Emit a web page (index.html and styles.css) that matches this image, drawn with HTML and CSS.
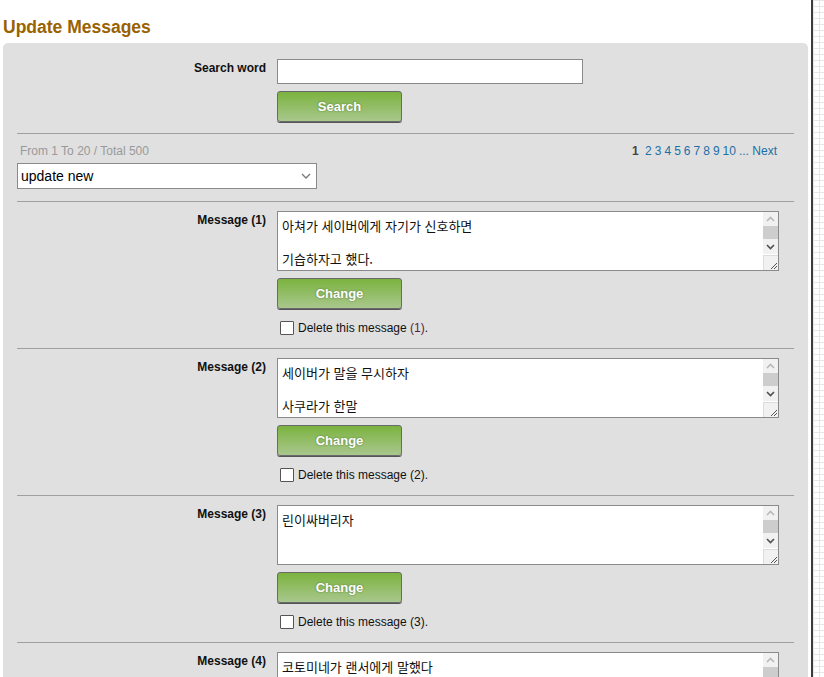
FILE: index.html
```html
<!DOCTYPE html>
<html lang="ko">

<head>
    <meta charset="UTF-8">
    <title>Update Messages</title>
    <link rel="stylesheet" href="styles.css">
</head>

<body>
    <div class="main">
        <h1 class="title">Update Messages</h1>

        <div class="panel">
            <!-- search -->
            <div class="row">
                <label class="label" for="word">Search word</label>
                <div class="field">
                    <input type="text" id="word" class="text-input">
                    <button class="green-btn">Search</button>
                </div>
            </div>

            <div class="rule rule-top"></div>

            <div class="list-head">
                <span class="count">From 1 To 20 / Total 500</span>
                <span class="pages">
                    <b>1</b>
                    <a href="#">2</a><a href="#">3</a><a href="#">4</a><a href="#">5</a><a href="#">6</a><a href="#">7</a><a href="#">8</a><a href="#">9</a><a href="#">10</a><span class="dots">...</span> <a href="#">Next</a>
                </span>
            </div>
            <select class="order">
                <option>update new</option>
                <option>update old</option>
            </select>

            <div class="rule rule-list"></div>

            <div class="row msg">
                <label class="label">Message (1)</label>
                <div class="field">
                    <div class="box">
                        <textarea class="msg-text">아쳐가 세이버에게 자기가 신호하면

기습하자고 했다.</textarea>
                        <div class="sbar">
                            <div class="sb-btn"><svg width="9" height="6"><path d="M1 5l3.5-3.5L8 5" fill="none" stroke="#b8b8b8" stroke-width="1.6"/></svg></div>
                            <div class="sb-thumb"></div>
                            <div class="sb-track"></div>
                            <div class="sb-btn"><svg width="9" height="6"><path d="M1 1l3.5 3.5L8 1" fill="none" stroke="#505050" stroke-width="1.6"/></svg></div>
                        </div>
                    </div>
                    <button class="green-btn">Change</button>
                    <label class="del"><input type="checkbox"><span>Delete this message <span class="num">(1)</span>.</span></label>
                </div>
            </div>
            <div class="rule"></div>

            <div class="row msg">
                <label class="label">Message (2)</label>
                <div class="field">
                    <div class="box">
                        <textarea class="msg-text">세이버가 말을 무시하자

사쿠라가 한말</textarea>
                        <div class="sbar">
                            <div class="sb-btn"><svg width="9" height="6"><path d="M1 5l3.5-3.5L8 5" fill="none" stroke="#b8b8b8" stroke-width="1.6"/></svg></div>
                            <div class="sb-thumb"></div>
                            <div class="sb-track"></div>
                            <div class="sb-btn"><svg width="9" height="6"><path d="M1 1l3.5 3.5L8 1" fill="none" stroke="#505050" stroke-width="1.6"/></svg></div>
                        </div>
                    </div>
                    <button class="green-btn">Change</button>
                    <label class="del"><input type="checkbox"><span>Delete this message (2).</span></label>
                </div>
            </div>
            <div class="rule"></div>

            <div class="row msg">
                <label class="label">Message (3)</label>
                <div class="field">
                    <div class="box">
                        <textarea class="msg-text">린이싸버리자</textarea>
                        <div class="sbar">
                            <div class="sb-btn"><svg width="9" height="6"><path d="M1 5l3.5-3.5L8 5" fill="none" stroke="#b8b8b8" stroke-width="1.6"/></svg></div>
                            <div class="sb-thumb"></div>
                            <div class="sb-track"></div>
                            <div class="sb-btn"><svg width="9" height="6"><path d="M1 1l3.5 3.5L8 1" fill="none" stroke="#505050" stroke-width="1.6"/></svg></div>
                        </div>
                    </div>
                    <button class="green-btn">Change</button>
                    <label class="del"><input type="checkbox"><span>Delete this message (3).</span></label>
                </div>
            </div>
            <div class="rule"></div>

            <div class="row msg">
                <label class="label">Message (4)</label>
                <div class="field">
                    <div class="box">
                        <textarea class="msg-text">코토미네가 랜서에게 말했다</textarea>
                        <div class="sbar">
                            <div class="sb-btn"><svg width="9" height="6"><path d="M1 5l3.5-3.5L8 5" fill="none" stroke="#b8b8b8" stroke-width="1.6"/></svg></div>
                            <div class="sb-thumb"></div>
                            <div class="sb-track"></div>
                            <div class="sb-btn"><svg width="9" height="6"><path d="M1 1l3.5 3.5L8 1" fill="none" stroke="#505050" stroke-width="1.6"/></svg></div>
                        </div>
                    </div>
                    <button class="green-btn">Change</button>
                    <label class="del"><input type="checkbox"><span>Delete this message (4).</span></label>
                </div>
            </div>
        </div>
    </div>
    <div class="side"></div>
</body>

</html>
```

FILE: styles.css
```css
html,
body {
    height: 100%;
    overflow: hidden;
}

body {
    font-family: "Liberation Sans", Arial, sans-serif;
    font-size: 12px;
    color: #222;
    margin: 0;
    padding: 0;
    display: flex;
    background-color: #fff;
}

.main {
    width: 805px;
    padding: 0 3px;
    flex-shrink: 0;
}

.side {
    flex: 1;
    border-left: 2px solid #3c3c3c;
    background-color: #fff;
    background-image:
        linear-gradient(#e6e6e6 1px, transparent 1px),
        linear-gradient(90deg, #e6e6e6 1px, transparent 1px);
    background-size: 6px 6px;
}

.title {
    font-size: 17.5px;
    color: #9a6200;
    margin: 0;
    padding: 17px 0 5px 0;
    line-height: 21px;
}

.panel {
    background-color: #e0e0e0;
    border-radius: 5px;
    padding: 16px 14px 20px 14px;
}

.row {
    display: grid;
    grid-template-columns: 249px 1fr;
    column-gap: 11px;
}

.label {
    font-weight: bold;
    text-align: right;
    padding-top: 2px;
    color: #111;
}

.field {
    display: flex;
    flex-direction: column;
    align-items: flex-start;
}

.text-input {
    width: 306px;
    height: 25px;
    box-sizing: border-box;
    border: 1px solid #8a8a8a;
    margin: 0;
}

.green-btn {
    width: 125px;
    height: 31px;
    margin-top: 7px;
    border: 1px solid #6a6a6a;
    border-radius: 3px;
    background: linear-gradient(#7bb33f, #a9c78d);
    color: white;
    font-family: "Liberation Sans", Arial, sans-serif;
    font-size: 13px;
    font-weight: bold;
    text-shadow: 0 0 2px rgba(40, 70, 30, 0.6);
    box-shadow: 0 1px 0 #555;
    cursor: pointer;
}

.rule {
    border-top: 1px solid #a0a0a0;
    margin: 13px 0 9px 0;
}

.rule-top {
    margin: 11px 0 10px 0;
}

.rule-list {
    margin: 12px 0 9px 0;
}

.list-head {
    display: flex;
    justify-content: space-between;
    padding: 0 14px 0 3px;
    line-height: 14px;
}

.count {
    color: #999;
}

.pages b {
    color: #444;
    margin-right: 3px;
}

.pages a {
    color: #1d6fa5;
    text-decoration: none;
    margin-right: 3px;
}

.pages .dots {
    color: #1d6fa5;
}

.order {
    display: block;
    margin-top: 5px;
    width: 300px;
    height: 26px;
    padding: 0 3px;
    border: 1px solid #8a8a8a;
    border-radius: 0;
    font-family: "Liberation Sans", Arial, sans-serif;
    font-size: 14px;
    background-color: #fff;
    color: #000;
    appearance: none;
    background-image: url("data:image/svg+xml,%3Csvg xmlns='http://www.w3.org/2000/svg' width='10' height='6'%3E%3Cpath d='M1 1l4 4 4-4' fill='none' stroke='%23777' stroke-width='1.3'/%3E%3C/svg%3E");
    background-repeat: no-repeat;
    background-position: right 5px center;
}

.msg .label {
    padding-top: 2px;
}

.box {
    position: relative;
    width: 502px;
    height: 60px;
}

.msg-text {
    display: block;
    width: 502px;
    height: 60px;
    box-sizing: border-box;
    border: 1px solid #8a8a8a;
    margin: 0;
    padding: 6px 20px 4px 4px;
    font-family: "Noto Sans CJK KR", "Liberation Sans", sans-serif;
    font-size: 13px;
    line-height: 16.5px;
    color: #111;
    overflow: hidden;
}

.msg-text::-webkit-resizer {
    background-color: #f1f1f1;
    background-image: url("data:image/svg+xml,%3Csvg xmlns='http://www.w3.org/2000/svg' width='15' height='15'%3E%3Cpath d='M13 7l-6 6M13 10l-3 3' stroke='%23555' stroke-width='1'/%3E%3C/svg%3E");
    border-left: 1px solid #dcdcdc;
    border-top: 1px solid #dcdcdc;
}

/* fake classic scrollbar drawn over the textarea */
.sbar {
    position: absolute;
    top: 1px;
    right: 1px;
    width: 15px;
    height: 42px;
    display: flex;
    flex-direction: column;
    background-color: #f1f1f1;
}

.sb-btn {
    height: 14px;
    display: flex;
    align-items: center;
    justify-content: center;
}

.sb-thumb {
    height: 13px;
    background-color: #cdcdcd;
}

.sb-track {
    flex: 1;
}

.del {
    display: flex;
    align-items: center;
    margin-top: 12px;
    margin-left: 3px;
    color: #111;
}

.del input {
    appearance: none;
    margin: 0 4px 0 0;
    width: 14px;
    height: 14px;
    border: 1px solid #555;
    border-radius: 1px;
    background-color: #fff;
}

.num {
    color: #5a1d45;
}
```
